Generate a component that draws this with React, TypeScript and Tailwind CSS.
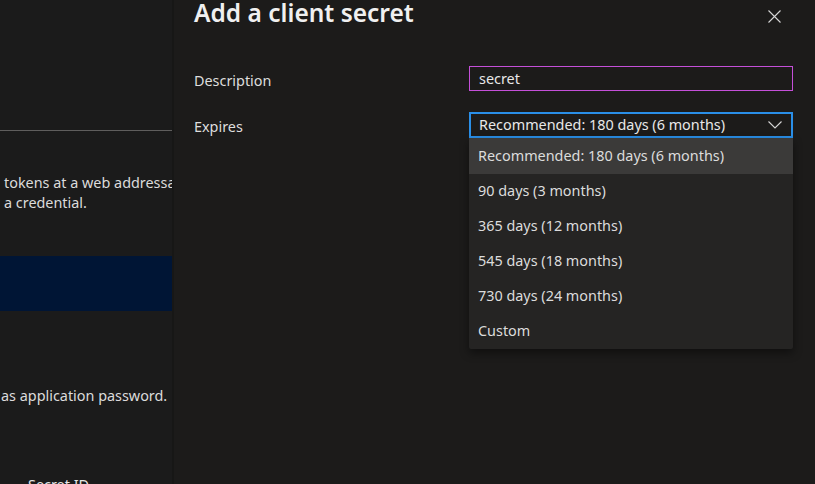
const options = [
  'Recommended: 180 days (6 months)',
  '90 days (3 months)',
  '365 days (12 months)',
  '545 days (18 months)',
  '730 days (24 months)',
  'Custom',
]

function Background() {
  return (
    <div className="w-[172px] shrink-0 h-full bg-[#1b1b1b] overflow-hidden text-[14.4px] text-[#dcdcdc] whitespace-nowrap">
      <div className="h-[131px] border-b border-[#5f5e5d]" />
      <div className="pt-[42px] pl-[4px] leading-[20px]">
        <div>tokens at a web addressable location (using an HTTPS scheme).</div>
        <div>a credential.</div>
      </div>
      <div className="mt-[43px] h-[55px] bg-[#001535]" />
      <div className="mt-[75px] pl-[1px] leading-[20px]">as application password.</div>
      <div className="mt-[69px] pl-[28px] leading-[20px] text-[#e6e6e6]">Secret ID</div>
    </div>
  )
}

function Chevron() {
  return (
    <svg width="14" height="8" viewBox="0 0 14 8" fill="none" className="shrink-0">
      <path d="M0.5 0.5 L7 7 L13.5 0.5" stroke="#d6d6d6" strokeWidth="1.1" />
    </svg>
  )
}

export default function App() {
  return (
    <div
      className="w-[815px] h-[484px] flex overflow-hidden bg-[#1b1b1b]"
      style={{ fontFamily: '"Noto Sans", "Open Sans", sans-serif' }}
    >
      <Background />
      <div className="relative flex-1 h-full bg-[#1c1b1a] border-l-2 border-[#171716] pl-[20px] pr-[22px]">
        <div className="flex items-start justify-between">
          <h1 className="mt-[-3px] text-[24.5px] leading-[32px] font-semibold text-[#f0f0f0]">Add a client secret</h1>
          <svg width="13" height="13" viewBox="0 0 13 13" className="mt-[10px] mr-[12px]">
            <path d="M0.5 0.5 L12.5 12.5 M12.5 0.5 L0.5 12.5" stroke="#d6d6d6" strokeWidth="1.1" />
          </svg>
        </div>

        <div className="mt-[37px] flex items-center text-[14.4px]">
          <div className="w-[275px] pt-[4px] text-[#dedede]">Description</div>
          <div className="w-[324px] h-[25px] border border-[#c44fd8] flex items-center px-[9px] text-[#e8e8e8]">
            secret
          </div>
        </div>

        <div className="relative mt-[20px] flex items-center text-[14.4px]">
          <div className="w-[275px] pt-[4px] text-[#dedede]">Expires</div>
          <div className="w-[324px] h-[26px] border-2 border-[#2a8fe8] flex items-center justify-between pl-[8px] pr-[9px] text-[#e8e8e8]">
            <span>Recommended: 180 days (6 months)</span>
            <Chevron />
          </div>
          <div className="absolute left-[275px] top-[26px] w-[324px] bg-[#252423] rounded-b-[2px] shadow-[0_4px_10px_rgba(0,0,0,0.45)]">
            {options.map((o, i) => (
              <div
                key={o}
                className={
                  'flex items-center px-[9px] text-[#dcdcdc] ' +
                  (i === 0 ? 'bg-[#3b3a39] h-[36px]' : 'h-[35px]')
                }
              >
                {o}
              </div>
            ))}
          </div>
        </div>
      </div>
    </div>
  )
}
